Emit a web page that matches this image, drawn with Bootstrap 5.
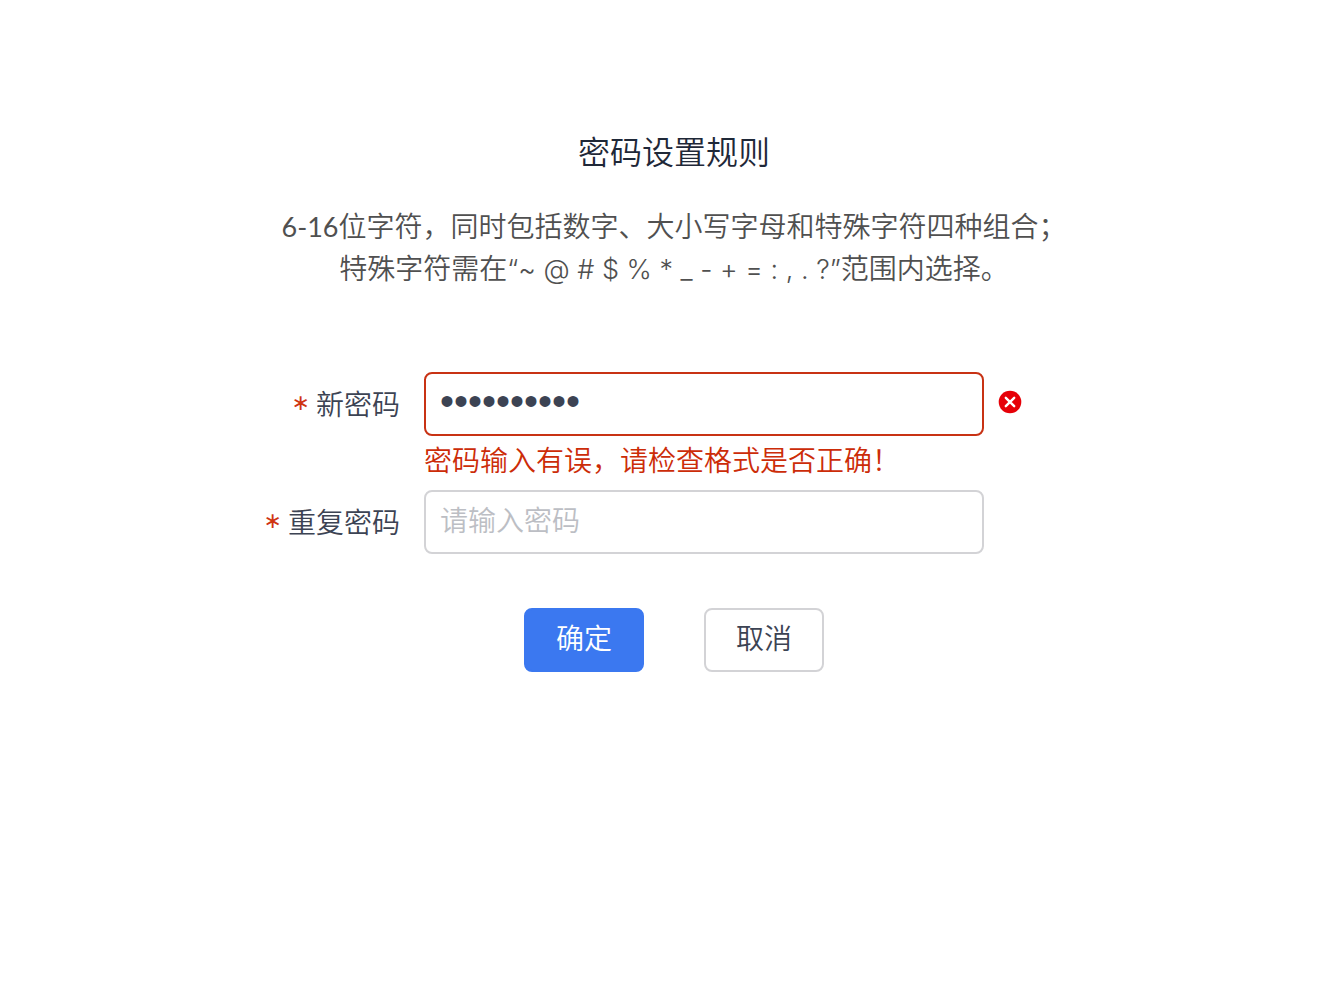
<!DOCTYPE html>
<html lang="zh-CN">
<head>
<meta charset="utf-8">
<meta name="viewport" content="width=device-width, initial-scale=1">
<title>密码设置规则</title>
<link href="https://cdn.jsdelivr.net/npm/bootstrap@5.3.0/dist/css/bootstrap.min.css" rel="stylesheet">
<style>
  body { background: #fff; font-family: "Noto Sans CJK SC", sans-serif; font-size: 28px; font-weight: 350; line-height: 42px; color: #3c4353; }
  .password-page { padding: 126px 0 64px 24px; }
  .password-panel { max-width: 824px; }
  .rule-title { font-size: 32px; line-height: 48px; font-weight: 350; color: #1f2838; margin-bottom: 30px; }
  .rule-text { color: #505050; margin-bottom: 84px; }
  .digit-range, .symbol-list { font-size: 27px; line-height: 1; }
  .digit-range { font-family: Lato, sans-serif; font-weight: 400; }
  .symbol-list { font-family: Inter, "Liberation Sans", sans-serif; font-weight: 300; }
  .field-label { width: 138px; line-height: 62px; }
  .required-star { color: #cf3412; font-family: "DejaVu Sans", sans-serif; font-size: 22px; font-weight: 400; margin-right: 6px; }
  .field-body { flex: 0 1 560px; min-width: 0; }
  .form-control.field-input { height: 64px; padding: 0 14px 6px; border: 2px solid #d3d3d6; border-radius: 8px; font-size: 28px; font-weight: 350; line-height: 42px; color: #3c4353; background: #fff; }
  .form-control.field-input::placeholder { color: #bcbec4; }
  .form-control.field-input.has-error { border-color: #c83214; }
  .form-control.field-input.has-value { font-family: "Liberation Sans", sans-serif; font-size: 40px; }
  .field-error { color: #cc2c08; padding: 2px 0 10px; }
  .status-icon { width: 24px; height: 24px; margin: 18px 0 0 14px; }
  .form-actions { gap: 60px; margin-top: 54px; }
  .form-actions .btn { width: 120px; height: 64px; padding: 0 0 6px; border-width: 2px; border-radius: 8px; font-size: 28px; font-weight: 350; line-height: 42px; }
  .btn-confirm, .btn-confirm:hover { background: #3b78f0; border-color: #3b78f0; color: #fff; }
  .btn-cancel, .btn-cancel:hover { background: #fff; border-color: #d3d3d6; color: #3c4353; }
</style>
</head>
<body>
<main class="password-page">
  <div class="password-panel mx-auto">
    <h1 class="rule-title text-center">密码设置规则</h1>
    <p class="rule-text text-center"><span class="digit-range">6-16</span>位字符，同时包括数字、大小写字母和特殊字符四种组合；<br>特殊字符需在<span class="symbol-list">“~ @ # $ % * _ - + = : , . ?”</span>范围内选择。</p>
    <form>
      <div class="d-flex align-items-start">
        <label class="field-label d-flex align-items-center justify-content-end text-nowrap flex-shrink-0 me-4" for="new-password"><span class="required-star">∗</span>新密码</label>
        <div class="field-body">
          <input class="form-control field-input has-value has-error" type="password" id="new-password" value="Abcdef1234" aria-invalid="true" aria-describedby="new-password-error">
          <div class="field-error" id="new-password-error">密码输入有误，请检查格式是否正确！</div>
        </div>
        <svg class="status-icon flex-shrink-0" viewBox="0 0 24 24" aria-hidden="true">
          <circle cx="12" cy="12" r="11.3" fill="#e60008"/>
          <path d="M7.8 7.8l8.4 8.4M16.2 7.8l-8.4 8.4" stroke="#fff" stroke-width="2.4" stroke-linecap="round"/>
        </svg>
      </div>
      <div class="d-flex align-items-start">
        <label class="field-label d-flex align-items-center justify-content-end text-nowrap flex-shrink-0 me-4" for="repeat-password"><span class="required-star">∗</span>重复密码</label>
        <div class="field-body">
          <input class="form-control field-input" type="password" id="repeat-password" placeholder="请输入密码">
        </div>
      </div>
      <div class="form-actions d-flex justify-content-center">
        <button type="button" class="btn btn-confirm">确定</button>
        <button type="button" class="btn btn-cancel">取消</button>
      </div>
    </form>
  </div>
</main>
<script src="https://cdn.jsdelivr.net/npm/bootstrap@5.3.0/dist/js/bootstrap.bundle.min.js"></script>
</body>
</html>
